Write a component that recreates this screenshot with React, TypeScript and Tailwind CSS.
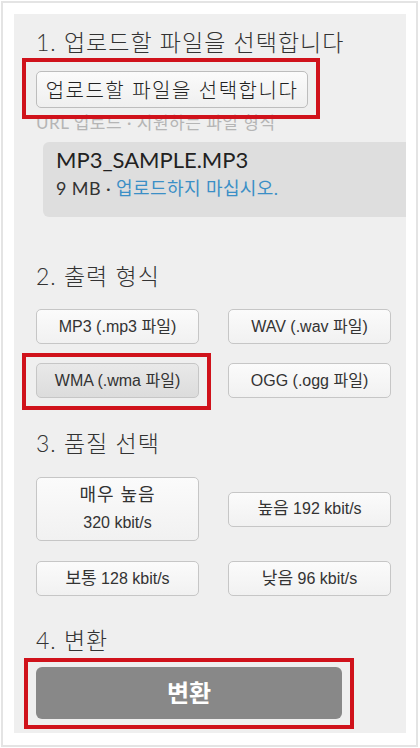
const hangul = "font-['Lato','Noto_Sans_CJK_KR',sans-serif]"
const btnFont = "font-['Liberation_Sans','Noto_Sans_CJK_KR',sans-serif]"

function OptionButton({ children, selected = false, tall = false }: { children: React.ReactNode, selected?: boolean, tall?: boolean }) {
    return (
        <button
            className={`${btnFont} w-[163px] ${tall ? "h-[64px]" : "h-[35px]"} rounded-[5px] border border-[#c6c6c6] text-[16px] text-[#333] flex flex-col items-center justify-center ${selected ? "bg-gradient-to-b from-[#e9e9e9] to-[#dcdcdc]" : "bg-gradient-to-b from-[#fbfbfb] to-[#f1f1f1]"}`}
        >
            {children}
        </button>
    )
}

function Heading({ children }: { children: React.ReactNode }) {
    return <h2 className={`${hangul} text-[23px] leading-[28px] tracking-[1px] font-light text-[#333]`}>{children}</h2>
}

export default function App() {
    return (
        <div className="w-[420px] h-[748px] bg-white pt-[1px] pl-[1px]">
            <div className="w-[417px] h-[746px] border-2 border-[#e4e4e4] pt-[11px] pl-[11px]">
                <div className="w-[392px] h-[719px] bg-[#efefef] pt-[14px] pl-[22px] pr-[15px] flex flex-col">
                    <Heading>1. 업로드할 파일을 선택합니다</Heading>

                    <div className="relative z-10 self-start mt-[2px] -ml-[14px] border-4 border-[#d0121b] pl-[10px] pr-[8px] pt-[9px] pb-[7px]">
                        <button className={`${hangul} h-[37px] w-[272px] rounded-[5px] border border-[#bdbdbd] bg-gradient-to-b from-[#fbfbfb] to-[#efefef] text-[20px] tracking-[1.5px] font-light text-[#222]`}>
                            업로드할 파일을 선택합니다
                        </button>
                    </div>

                    <div className={`${hangul} -mt-[6px] text-[17px] leading-[20px] tracking-[0.5px] text-[#b5b5b5]`}>
                        URL 업로드 · 지원하는 파일 형식
                    </div>

                    <div className={`${hangul} mt-[9px] ml-[7px] -mr-[15px] h-[75px] rounded-l-[6px] bg-[#dedede] pl-[13px] pt-[4px]`}>
                        <div className="text-[22px] leading-[28px] text-[#222]">MP3_SAMPLE.MP3</div>
                        <div className="mt-[3px] text-[18px] leading-[22px] tracking-[0.4px] text-[#333]">
                            9 MB · <span className="text-[#3b8fc6]">업로드하지 마십시오.</span>
                        </div>
                    </div>

                    <div className="mt-[45px]">
                        <Heading>2. 출력 형식</Heading>
                    </div>
                    <div className="mt-[19px] grid grid-cols-[163px_163px] gap-x-[29px] gap-y-[19px]">
                        <OptionButton>MP3 (.mp3 파일)</OptionButton>
                        <OptionButton>WAV (.wav 파일)</OptionButton>
                        <div className="-ml-[14px] -mr-[12px] -mt-[10px] -mb-[12px] border-4 border-[#d0121b] pl-[10px] pr-[8px] pt-[6px] pb-[8px]">
                            <OptionButton selected>WMA (.wma 파일)</OptionButton>
                        </div>
                        <OptionButton>OGG (.ogg 파일)</OptionButton>
                    </div>

                    <div className="mt-[31px]">
                        <Heading>3. 품질 선택</Heading>
                    </div>
                    <div className="mt-[20px] grid grid-cols-[163px_163px] gap-x-[29px] gap-y-[20px] items-center">
                        <OptionButton tall>
                            <span className="text-[18px] tracking-[1px] leading-[22px]">매우 높음</span>
                            <span className="text-[16px] leading-[22px] mt-[6px]">320 kbit/s</span>
                        </OptionButton>
                        <OptionButton><span className="text-[16px]"><span className="text-[17px]">높음</span> 192 kbit/s</span></OptionButton>
                        <OptionButton><span className="text-[16px]"><span className="text-[17px]">보통</span> 128 kbit/s</span></OptionButton>
                        <OptionButton><span className="text-[16px]"><span className="text-[17px]">낮음</span> 96 kbit/s</span></OptionButton>
                    </div>

                    <div className="mt-[30px]">
                        <Heading>4. 변환</Heading>
                    </div>
                    <div className="self-start mt-[4px] -ml-[12px] border-4 border-[#d0121b] px-[8px] pt-[5px] pb-[6px]">
                        <button className={`${hangul} h-[52px] w-[306px] rounded-[6px] bg-[#888888] text-[24px] font-bold text-white`}>
                            변환
                        </button>
                    </div>
                </div>
            </div>
        </div>
    )
}
